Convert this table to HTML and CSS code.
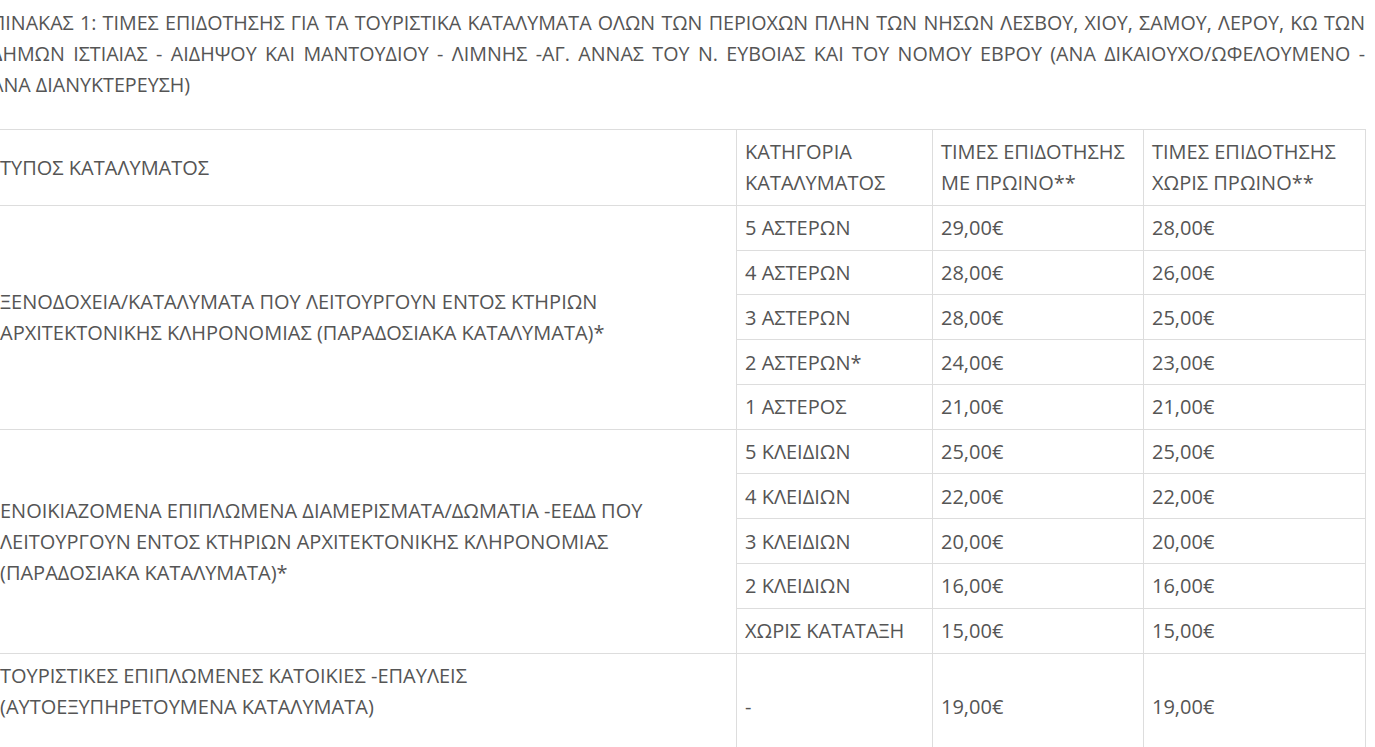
FILE: index.html
```html
<!DOCTYPE html>
<html lang="el">
<head>
<meta charset="utf-8">
<title>Πίνακας 1</title>
<link rel="stylesheet" href="styles.css">
</head>
<body>
<div class="wrap">
  <p class="title">ΠΙΝΑΚΑΣ 1: ΤΙΜΕΣ ΕΠΙΔΟΤΗΣΗΣ ΓΙΑ ΤΑ ΤΟΥΡΙΣΤΙΚΑ ΚΑΤΑΛΥΜΑΤΑ ΟΛΩΝ ΤΩΝ ΠΕΡΙΟΧΩΝ ΠΛΗΝ ΤΩΝ ΝΗΣΩΝ ΛΕΣΒΟΥ, ΧΙΟΥ, ΣΑΜΟΥ, ΛΕΡΟΥ, ΚΩ ΤΩΝ ΔΗΜΩΝ ΙΣΤΙΑΙΑΣ - ΑΙΔΗΨΟΥ ΚΑΙ ΜΑΝΤΟΥΔΙΟΥ - ΛΙΜΝΗΣ -ΑΓ. ΑΝΝΑΣ ΤΟΥ Ν. ΕΥΒΟΙΑΣ ΚΑΙ ΤΟΥ ΝΟΜΟΥ ΕΒΡΟΥ (ΑΝΑ ΔΙΚΑΙΟΥΧΟ/ΩΦΕΛΟΥΜΕΝΟ - ΑΝΑ&nbsp;ΔΙΑΝΥΚΤΕΡΕΥΣΗ)</p>
  <table class="rates">
    <colgroup>
      <col class="c-type">
      <col class="c-cat">
      <col class="c-with">
      <col class="c-without">
    </colgroup>
    <tbody>
      <tr>
        <td>ΤΥΠΟΣ ΚΑΤΑΛΥΜΑΤΟΣ</td>
        <td>ΚΑΤΗΓΟΡΙΑ ΚΑΤΑΛΥΜΑΤΟΣ</td>
        <td>ΤΙΜΕΣ ΕΠΙΔΟΤΗΣΗΣ ΜΕ ΠΡΩΙΝΟ**</td>
        <td>ΤΙΜΕΣ ΕΠΙΔΟΤΗΣΗΣ ΧΩΡΙΣ ΠΡΩΙΝΟ**</td>
      </tr>
      <tr>
        <td rowspan="5">ΞΕΝΟΔΟΧΕΙΑ/ΚΑΤΑΛΥΜΑΤΑ ΠΟΥ ΛΕΙΤΟΥΡΓΟΥΝ ΕΝΤΟΣ ΚΤΗΡΙΩΝ<br>ΑΡΧΙΤΕΚΤΟΝΙΚΗΣ ΚΛΗΡΟΝΟΜΙΑΣ (ΠΑΡΑΔΟΣΙΑΚΑ ΚΑΤΑΛΥΜΑΤΑ)*</td>
        <td>5 ΑΣΤΕΡΩΝ</td><td>29,00€</td><td>28,00€</td>
      </tr>
      <tr><td>4 ΑΣΤΕΡΩΝ</td><td>28,00€</td><td>26,00€</td></tr>
      <tr><td>3 ΑΣΤΕΡΩΝ</td><td>28,00€</td><td>25,00€</td></tr>
      <tr><td>2 ΑΣΤΕΡΩΝ*</td><td>24,00€</td><td>23,00€</td></tr>
      <tr><td>1 ΑΣΤΕΡΟΣ</td><td>21,00€</td><td>21,00€</td></tr>
      <tr>
        <td rowspan="5">ΕΝΟΙΚΙΑΖΟΜΕΝΑ ΕΠΙΠΛΩΜΕΝΑ ΔΙΑΜΕΡΙΣΜΑΤΑ/ΔΩΜΑΤΙΑ -ΕΕΔΔ ΠΟΥ<br>ΛΕΙΤΟΥΡΓΟΥΝ ΕΝΤΟΣ ΚΤΗΡΙΩΝ ΑΡΧΙΤΕΚΤΟΝΙΚΗΣ ΚΛΗΡΟΝΟΜΙΑΣ<br>(ΠΑΡΑΔΟΣΙΑΚΑ ΚΑΤΑΛΥΜΑΤΑ)*</td>
        <td>5 ΚΛΕΙΔΙΩΝ</td><td>25,00€</td><td>25,00€</td>
      </tr>
      <tr><td>4 ΚΛΕΙΔΙΩΝ</td><td>22,00€</td><td>22,00€</td></tr>
      <tr><td>3 ΚΛΕΙΔΙΩΝ</td><td>20,00€</td><td>20,00€</td></tr>
      <tr><td>2 ΚΛΕΙΔΙΩΝ</td><td>16,00€</td><td>16,00€</td></tr>
      <tr><td>ΧΩΡΙΣ ΚΑΤΑΤΑΞΗ</td><td>15,00€</td><td>15,00€</td></tr>
      <tr>
        <td>ΤΟΥΡΙΣΤΙΚΕΣ ΕΠΙΠΛΩΜΕΝΕΣ ΚΑΤΟΙΚΙΕΣ -ΕΠΑΥΛΕΙΣ<br>(ΑΥΤΟΕΞΥΠΗΡΕΤΟΥΜΕΝΑ ΚΑΤΑΛΥΜΑΤΑ)<br>&nbsp;</td>
        <td>-</td><td>19,00€</td><td>19,00€</td>
      </tr>
    </tbody>
  </table>
</div>
</body>
</html>
```
FILE: styles.css
```css
html, body {
  margin: 0;
  padding: 0;
  background: #ffffff;
}
body {
  font-family: "Open Sans", "Liberation Sans", sans-serif;
  font-size: 20px;
  color: #555555;
  overflow: hidden;
}
.wrap {
  margin-left: -9px;
  width: 1374px;
  padding-top: 7px;
}
.title {
  margin: 0 0 29px 0;
  font-size: 19.7px;
  line-height: 31px;
  text-align: justify;
}
.rates {
  width: 1375px;
  border-collapse: collapse;
  table-layout: fixed;
}
.c-type { width: 745px; }
.c-cat { width: 196px; }
.c-with { width: 211px; }
.c-without { width: 222px; }
.rates td {
  border: 1px solid #dddddd;
  padding: 6.4px 8px;
  line-height: 31px;
  vertical-align: middle;
  text-align: left;
}
```
